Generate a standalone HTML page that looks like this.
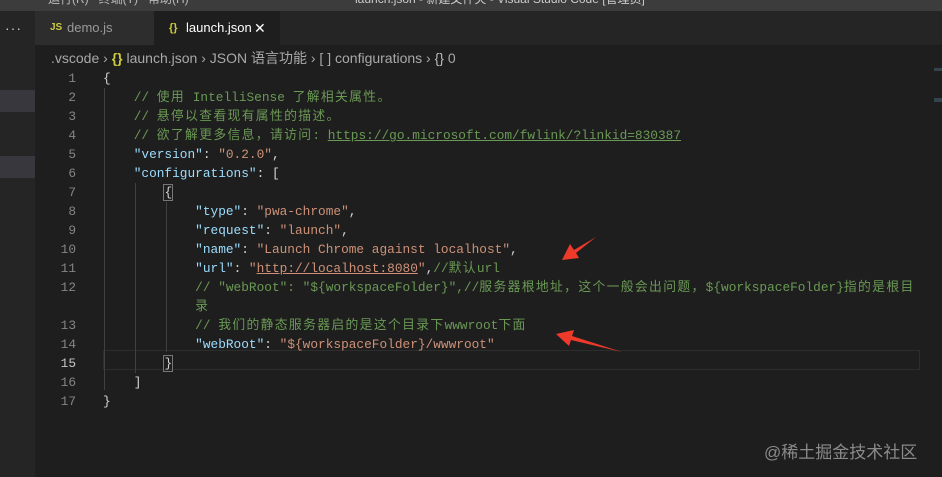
<!DOCTYPE html>
<html><head><meta charset="utf-8"><style>
*{margin:0;padding:0;box-sizing:border-box}
body{width:942px;height:477px;background:#1e1e1e;overflow:hidden;position:relative;font-family:"Liberation Sans","Noto Sans CJK SC",sans-serif}
.abs{position:absolute}
#title{left:0;top:0;width:942px;height:11px;background:#3c3c3c;overflow:hidden;color:#ccc;font-size:12px}
#title span{position:absolute;top:-10px}
#side{left:0;top:11px;width:35px;height:466px;background:#252526}
#tabs{left:35px;top:11px;width:907px;height:34px;background:#252526}
.tab{position:absolute;top:0;height:34px;font-size:13px;line-height:34px;color:#9a9a9a}
.code{font-family:"Liberation Mono","Noto Sans CJK SC",monospace;font-size:12.8px;white-space:pre;line-height:19px}
.ln{position:absolute;left:40px;width:36px;text-align:right;color:#858585}
.l{position:absolute;left:103px;color:#d4d4d4}
.k{color:#9cdcfe}.s{color:#ce9178}.c{color:#6a9955}.u{text-decoration:underline}
.z{letter-spacing:1.35px}
.g{position:absolute;width:1px;background:#404040}
</style></head><body>
<div id="title" class="abs"><span style="left:48px;color:#bbb">运行(R)&nbsp;&nbsp;&nbsp;终端(T)&nbsp;&nbsp;&nbsp;帮助(H)</span><span style="left:355px">launch.json - 新建文件夹 - Visual Studio Code [管理员]</span></div>
<div id="side" class="abs">
<div class="abs" style="left:0;top:79px;width:35px;height:22px;background:#37373d"></div>
<div class="abs" style="left:0;top:145px;width:35px;height:22px;background:#37373d"></div>
</div>
<div class="abs" style="left:5px;top:20px;color:#ccc;font-size:14px;letter-spacing:1px">···</div>
<div id="tabs" class="abs">
<div class="tab" style="left:0;width:119px;background:#2d2d2d"><span style="color:#cbcb41;font-weight:bold;font-size:10px;position:absolute;left:15px">JS</span><span style="position:absolute;left:32px">demo.js</span></div>
<div class="tab" style="left:119px;width:126px;background:#1e1e1e;color:#fff"><span style="color:#cbcb41;font-weight:bold;font-size:11px;position:absolute;left:15px">{}</span><span style="position:absolute;left:32px">launch.json</span><span style="position:absolute;left:100px;font-size:14px">✕</span></div>
</div>
<div class="abs" style="left:51px;top:48px;font-size:14px;color:#a9a9a9;white-space:nowrap">.vscode › <span style="color:#cbcb41;font-weight:bold">{}</span> launch.json › JSON 语言功能 › [ ] configurations › <span style="color:#bbb">{}</span> 0</div>
<div class="abs" style="left:103px;top:350px;width:817px;height:20px;border:1px solid #2d2d2d"></div>
<div class="g" style="left:104px;top:88px;height:302px"></div>
<div class="g" style="left:135px;top:183px;height:190px"></div>
<div class="g" style="left:166px;top:202px;height:150px"></div>
<div class="code">
<div class="ln" style="top:69px">1</div><div class="ln" style="top:88px">2</div><div class="ln" style="top:107px">3</div><div class="ln" style="top:126px">4</div><div class="ln" style="top:145px">5</div><div class="ln" style="top:164px">6</div><div class="ln" style="top:183px">7</div><div class="ln" style="top:202px">8</div><div class="ln" style="top:221px">9</div><div class="ln" style="top:240px">10</div><div class="ln" style="top:259px">11</div><div class="ln" style="top:278px">12</div><div class="ln" style="top:316px">13</div><div class="ln" style="top:335px">14</div><div class="ln" style="top:354px;color:#c6c6c6">15</div><div class="ln" style="top:373px">16</div><div class="ln" style="top:392px">17</div>
<div class="l" style="top:69px">{</div>
<div class="l" style="top:88px">    <span class="c">// <span class="z">使用</span> IntelliSense <span class="z">了解相关属性。</span></span></div>
<div class="l" style="top:107px">    <span class="c">// <span class="z">悬停以查看现有属性的描述。</span></span></div>
<div class="l" style="top:126px">    <span class="c">// <span class="z">欲了解更多信息，请访问</span>: <span class="u">https://go.microsoft.com/fwlink/?linkid=830387</span></span></div>
<div class="l" style="top:145px">    <span class="k">"version"</span>: <span class="s">"0.2.0"</span>,</div>
<div class="l" style="top:164px">    <span class="k">"configurations"</span>: [</div>
<div class="l" style="top:183px">        <span style="outline:1px solid #777">{</span></div>
<div class="l" style="top:202px">            <span class="k">"type"</span>: <span class="s">"pwa-chrome"</span>,</div>
<div class="l" style="top:221px">            <span class="k">"request"</span>: <span class="s">"launch"</span>,</div>
<div class="l" style="top:240px">            <span class="k">"name"</span>: <span class="s">"Launch Chrome against localhost"</span>,</div>
<div class="l" style="top:259px">            <span class="k">"url"</span>: <span class="s">"<span class="u">http://localhost:8080</span>"</span>,<span class="c">//<span class="z">默认</span>url</span></div>
<div class="l" style="top:278px">            <span class="c">// "webRoot": "${workspaceFolder}",//<span class="z">服务器根地址，这个一般会出问题，</span>${workspaceFolder}<span class="z">指的是根目</span></span></div>
<div class="l" style="top:297px">            <span class="c">录</span></div>
<div class="l" style="top:316px">            <span class="c">// <span class="z">我们的静态服务器启的是这个目录下</span>wwwroot<span class="z">下面</span></span></div>
<div class="l" style="top:335px">            <span class="k">"webRoot"</span>: <span class="s">"${workspaceFolder}/wwwroot"</span></div>
<div class="l" style="top:354px">        <span style="outline:1px solid #777">}</span></div>
<div class="l" style="top:373px">    ]</div>
<div class="l" style="top:392px">}</div>
</div>
<svg class="abs" style="left:0;top:0" width="942" height="477">
<polygon points="562,260 570,244 574,250 596,237 576,253 579,258" fill="#ee3a2b"/>
<polygon points="556,334 574,330 572,336 622,352 571,340 569,346" fill="#ee3a2b"/>
</svg>
<div class="abs" style="left:764px;top:438px;font-size:17px;color:#8a8a8a">@稀土掘金技术社区</div>
<div class="abs" style="left:934px;top:68px;width:8px;height:34px;opacity:.5;background:linear-gradient(#4a6a7a 0 3px,transparent 3px 30px,#4a6a7a 30px)"></div>
</body></html>
